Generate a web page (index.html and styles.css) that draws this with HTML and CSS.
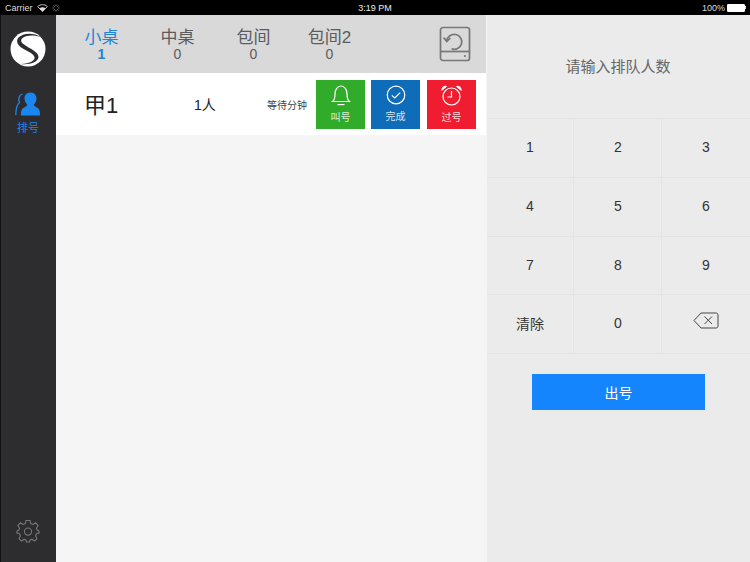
FILE: index.html
```html
<!DOCTYPE html>
<html>
<head>
  <title>排号</title>
  <link rel="stylesheet" href="styles.css">
</head>
<body>
  <div class="status-bar">
    <div class="status-left">
      <span>Carrier</span>
      <svg width="11" height="8" viewBox="0 0 13 10"><path d="M6.5 9.5 L0.5 3.2 C4 0 9 0 12.5 3.2 Z" fill="none" stroke="#ddd" stroke-width="1.1"/><path d="M6.5 9.5 L2.8 5.4 C5 3.6 8 3.6 10.2 5.4 Z" fill="#ddd"/></svg>
      <svg width="8" height="8" viewBox="0 0 9 9" stroke="#888" stroke-width="1"><path d="M4.5 0.5V2.5M4.5 6.5V8.5M0.5 4.5H2.5M6.5 4.5H8.5M1.7 1.7L3 3M6 6L7.3 7.3M1.7 7.3L3 6M6 3L7.3 1.7"/></svg>
    </div>
    <div class="status-time">3:19 PM</div>
    <div class="status-right">
      <span>100%</span>
      <div class="battery"></div>
      <div class="battery-tip"></div>
    </div>
  </div>

  <div class="app">
    <div class="sidebar">
      <svg class="logo" width="36" height="36" viewBox="0 0 36 36">
        <circle cx="18" cy="18" r="17.5" fill="#fff"/>
        <path d="M31 6 C24 1.5 14 1.5 9 6 C5 10 8 14.5 12 17 C16 19.5 23 22 24.5 26 C25.5 29.5 20 32.5 11 33 C19 34 27.5 31.5 28.5 26.5 C29 22 22 18.5 17 15.5 C13 13 9.5 10.5 12 7.5 C15 4 24 3.5 31 6 Z" fill="#2d2d2f"/>
      </svg>
      <div class="nav-item">
        <svg width="26" height="24" viewBox="0 0 26 24">
          <path d="M7.5 2 C4 3 3 7 4.5 10.5 C2 12.5 0.8 17 0.8 23" fill="none" stroke="#1a86f0" stroke-width="1.3"/>
          <path d="M15.5 0.5 C19.5 0.5 21.7 3.5 21.5 6.8 C21.3 9.5 20 11.5 18.8 12.6 C18.8 14 20 14.6 21.5 15.3 C24 16.5 25.1 18 25.1 23.5 H5.9 C5.9 18 7 16.5 9.5 15.3 C11 14.6 12.2 14 12.2 12.6 C11 11.5 9.7 9.5 9.5 6.8 C9.3 3.5 11.5 0.5 15.5 0.5 Z" fill="#1a86f0"/>
        </svg>
        <span>排号</span>
      </div>
      <svg class="settings" width="24" height="24" viewBox="0 0 24 24" fill="none" stroke="#77777a" stroke-width="1.1">
        <path d="M10 1.5 H14 L14.7 4.6 L16.9 5.5 L19.6 3.8 L22.2 6.6 L20.4 9.2 L21.2 11 L23 12 V14 L20.4 14.8 L19.6 17 L21 19.8 L18.4 22 L16 20.2 L14.2 21 L13.6 23 H10.4 L9.8 21 L8 20.2 L5.6 22 L3 19.8 L4.4 17 L3.6 14.8 L1 14 V12 L2.8 11 L3.6 9.2 L1.8 6.6 L4.4 3.8 L7.1 5.5 L9.3 4.6 Z"/>
        <circle cx="12" cy="12.6" r="3.6"/>
      </svg>
    </div>

    <div class="main">
      <div class="tabs">
        <div class="tab active"><div class="tab-name">小桌</div><div class="tab-count">1</div></div>
        <div class="tab"><div class="tab-name">中桌</div><div class="tab-count">0</div></div>
        <div class="tab"><div class="tab-name">包间</div><div class="tab-count">0</div></div>
        <div class="tab"><div class="tab-name">包间2</div><div class="tab-count">0</div></div>
        <svg class="history" width="32" height="36" viewBox="0 0 32 36" fill="none" stroke="#77777a" stroke-width="1.7">
          <rect x="1.5" y="1.5" width="29" height="33" rx="2.5"/>
          <path d="M1.5 25.5 H30.5"/>
          <circle cx="26" cy="30" r="1.1" fill="#77777a" stroke="none"/>
          <path d="M7.8 15 A7.5 7.5 0 1 1 12.5 22.8"/>
          <path d="M4.6 11.6 L7.8 15.4 L11.4 12"/>
        </svg>
      </div>

      <div class="ticket">
        <div class="ticket-no">甲1</div>
        <div class="ticket-people">1人</div>
        <div class="ticket-wait">等待分钟</div>
        <div class="actions">
          <div class="action green">
            <svg width="20" height="21" viewBox="0 0 20 21" fill="none" stroke="#fff" stroke-width="1.2"><path d="M1.5 16.5 C3.5 15 4 13 4 9 C4 4.5 6.5 1 10 1 C13.5 1 16 4.5 16 9 C16 13 16.5 15 18.5 16.5 Z"/><path d="M6.5 19.6 H13.5"/></svg>
            <span>叫号</span>
          </div>
          <div class="action blue">
            <svg width="20" height="20" viewBox="0 0 20 20" fill="none" stroke="#fff" stroke-width="1.2"><circle cx="10" cy="10" r="8.8"/><path d="M5.8 10.4 L8.8 13 L14.2 7.6"/></svg>
            <span>完成</span>
          </div>
          <div class="action red">
            <svg width="21" height="21" viewBox="0 0 21 21" fill="none" stroke="#fff" stroke-width="1.2"><circle cx="10.5" cy="11.5" r="8.5"/><path d="M10.5 6 V12 H6.5"/><path d="M1 5 C1 2.5 3 1 5 1.5 Z" fill="#fff"/><path d="M20 5 C20 2.5 18 1 16 1.5 Z" fill="#fff"/></svg>
            <span>过号</span>
          </div>
        </div>
      </div>
    </div>

    <div class="panel">
      <div class="prompt">请输入排队人数</div>
      <div class="keypad">
        <div class="key">1</div>
        <div class="key">2</div>
        <div class="key">3</div>
        <div class="key">4</div>
        <div class="key">5</div>
        <div class="key">6</div>
        <div class="key">7</div>
        <div class="key">8</div>
        <div class="key">9</div>
        <div class="key">清除</div>
        <div class="key">0</div>
        <div class="key key-back">
          <svg width="26" height="17" viewBox="0 0 26 17" fill="none" stroke="#444" stroke-width="1"><path d="M8 1 H23 C24.2 1 25 1.8 25 3 V14 C25 15.2 24.2 16 23 16 H8 L1 8.5 Z"/><path d="M11.5 4.5 L19 12 M19 4.5 L11.5 12"/></svg>
        </div>
      </div>
      <div class="submit">出号</div>
    </div>
  </div>
</body>
</html>
```

FILE: styles.css
```css
body {
  margin: 0;
  width: 750px;
  height: 562px;
  overflow: hidden;
  font-family: "Liberation Sans", "Noto Sans CJK SC", sans-serif;
  background-color: #000;
}

.status-bar {
  height: 15px;
  padding: 0 5px;
  display: grid;
  grid-template-columns: 1fr auto 1fr;
  align-items: center;
  background-color: #000;
  color: #ddd;
  font-size: 9px;
}

.status-left {
  display: flex;
  align-items: center;
  gap: 4px;
}

.status-time {
  color: #eee;
}

.status-right {
  display: flex;
  align-items: center;
  justify-content: flex-end;
}

.status-right span {
  margin-right: 2px;
}

.battery {
  width: 16px;
  height: 6px;
  background-color: #fff;
  border: 1px solid #fff;
  border-radius: 1px;
}

.battery-tip {
  width: 1px;
  height: 3px;
  margin-right: -1px;
  background-color: #ddd;
}

.app {
  height: 547px;
  display: flex;
  background-color: #f5f5f5;
}

.sidebar {
  width: 55px;
  border-left: 1px solid #111;
  flex-shrink: 0;
  display: flex;
  flex-direction: column;
  align-items: center;
  background-color: #2d2d2f;
}

.logo {
  margin-top: 16px;
  margin-right: 1px;
}

.nav-item {
  margin-top: 25px;
  margin-right: 1px;
  display: flex;
  flex-direction: column;
  align-items: center;
  gap: 3px;
  color: #1a86f0;
  font-size: 11px;
}

.settings {
  margin-top: auto;
  margin-bottom: 19px;
  margin-right: 1px;
}

.main {
  width: 430px;
  flex-shrink: 0;
}

.tabs {
  height: 58px;
  padding-left: 7px;
  padding-right: 15px;
  display: flex;
  align-items: center;
  background-color: #d9d9d9;
  color: #5c5c5c;
}

.tab {
  width: 76px;
  padding-left: 1px;
  box-sizing: border-box;
  text-align: center;
}

.tab-name {
  font-size: 17px;
  line-height: 22px;
}

.tab-count {
  margin-top: -2px;
  font-size: 14px;
  line-height: 14px;
}

.tab.active {
  color: #2485d8;
}

.tab.active .tab-count {
  font-weight: bold;
}

.history {
  margin-left: auto;
}

.ticket {
  height: 62px;
  display: flex;
  align-items: center;
  background-color: #fff;
  color: #222;
}

.ticket-no {
  width: 121px;
  padding-left: 28px;
  padding-bottom: 2px;
  box-sizing: border-box;
  flex-shrink: 0;
  font-size: 22px;
}

.ticket-people {
  width: 90px;
  padding-left: 17px;
  box-sizing: border-box;
  flex-shrink: 0;
  font-size: 14px;
}

.ticket-wait {
  width: 49px;
  flex-shrink: 0;
  font-size: 10px;
  color: #444;
  white-space: nowrap;
}

.actions {
  display: flex;
  gap: 6px;
}

.action {
  width: 49px;
  height: 49px;
  padding-top: 5px;
  box-sizing: border-box;
  display: flex;
  flex-direction: column;
  align-items: center;
  gap: 3px;
  color: rgba(255, 255, 255, 0.85);
  font-size: 10px;
}

.green {
  background-color: #30ac2a;
}

.blue {
  background-color: #0f6cb8;
}

.red {
  margin-left: 1px;
  background-color: #f01c30;
}

.panel {
  flex: 1;
  margin-left: 1px;
  background-color: #ebebeb;
}

.prompt {
  height: 103px;
  padding-bottom: 3px;
  padding-right: 1px;
  box-sizing: border-box;
  display: flex;
  align-items: center;
  justify-content: center;
  color: #666;
  font-size: 15px;
}

.keypad {
  display: grid;
  grid-template-columns: 87px 88px 88px;
  grid-template-rows: 59px 59px 58px 59px;
  border-top: 1px solid #e3e3e3;
}

.key {
  padding-bottom: 2px;
  display: flex;
  align-items: center;
  justify-content: center;
  box-sizing: border-box;
  border-right: 1px solid #e3e3e3;
  border-bottom: 1px solid #e3e3e3;
  color: #333;
  font-size: 14px;
}

.key:nth-child(3n) {
  border-right: none;
}

.key:nth-child(2),
.key:nth-child(5),
.key:nth-child(8),
.key:nth-child(11) {
  padding-left: 1px;
}

.key-back {
  padding-bottom: 8px;
}

.submit {
  width: 173px;
  height: 36px;
  margin: 20px 0 0 45px;
  display: flex;
  align-items: center;
  justify-content: center;
  background-color: #1485fd;
  color: #fff;
  font-size: 14px;
}
```
